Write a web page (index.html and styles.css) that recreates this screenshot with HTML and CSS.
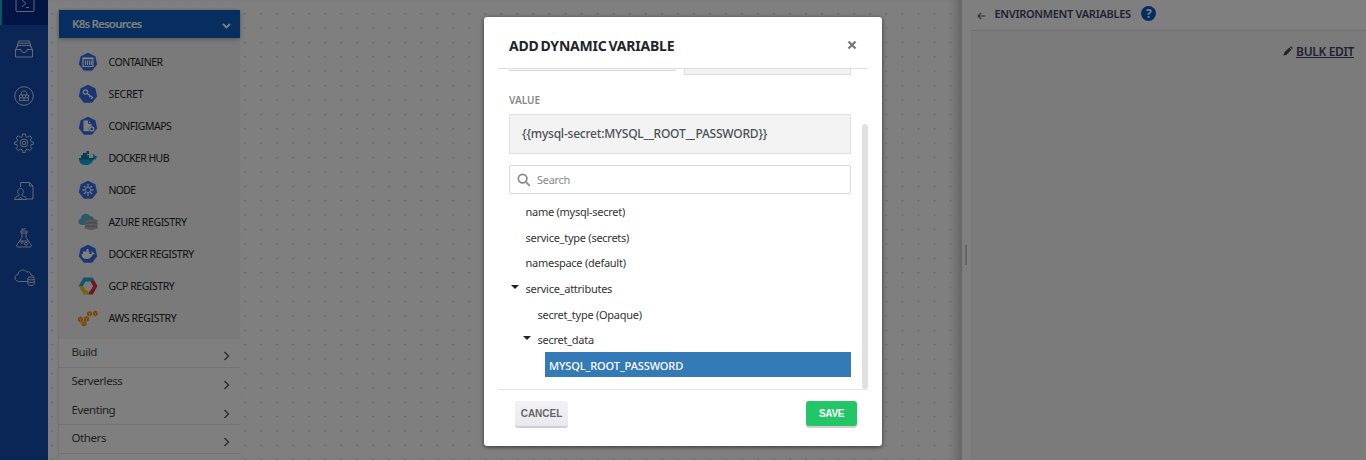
FILE: index.html
```html
<!DOCTYPE html>
<html lang="en">
<head>
<meta charset="utf-8">
<title>Add dynamic variable</title>
<link rel="stylesheet" href="styles.css">
</head>
<body>
<div class="app">
  <nav class="rail">
    <div class="rail-item active"><svg width="20" height="20" viewBox="0 0 20 20"><rect x="1" y="1" width="18" height="16.500" rx="1"/><path d="M7 6l4 3.500-4 3.500M11 13.500h3"/></svg></div>
    <div class="rail-item"><svg width="20" height="20" viewBox="0 0 20 20"><path d="M4.500 2h11M4 4.200h12M3.500 6.400h13M4.500 2L3 8.500M15.500 2L17 8.500M1.500 10.500h5.500c0 2 1.300 3 3 3s3-1 3-3h5.500v7.500h-17zM1.500 10.500L3.500 7M18.500 10.500L16.500 7"/></svg></div>
    <div class="rail-item"><svg width="20" height="20" viewBox="0 0 20 20"><circle cx="10" cy="10" r="9.300"/><path d="M5.500 9h9v5.700h-9zM7.300 9V7.500c0-3.500 5.400-3.500 5.400 0V9M5.500 11.800h9M8.500 9v2.800M11.500 9v2.800M10 12v2.500"/></svg></div>
    <div class="rail-item gear"><svg width="20" height="20" viewBox="0 0 20 20"><path d="M8.600 1h2.800l.5 2.600 1.700.7 2.200-1.500 2 2-1.500 2.200.7 1.700 2.600.5v2l-2.600.5-.7 1.700 1.500 2.200-2 2-2.200-1.500-1.700.7-.5 2.600H8.600l-.5-2.600-1.700-.7-2.200 1.500-2-2 1.500-2.200-.7-1.700L.5 11.200v-2L3 8.700 3.700 7 2.200 4.800l2-2 2.200 1.500 1.700-.7z"/><circle cx="10" cy="10" r="3.900"/><circle cx="10" cy="10" r="1.700"/></svg></div>
    <div class="rail-item"><svg width="20" height="20" viewBox="0 0 20 20"><path d="M6.500 6V1.500h9l3.500 3.500v13h-6M15.500 1.500V5H19M4.800 13.500c-1.700-2-1.500-6 1.700-6s3.400 4 1.700 6v1.300c2 .6 4 1 4.300 3.700h-12c.3-2.700 2.300-3.100 4.300-3.700zM4 18.500l2.500-2 2.500 2"/></svg></div>
    <div class="rail-item"><svg width="20" height="20" viewBox="0 0 20 20"><path d="M7 3h6v2H7zM8 5v4.500L2.800 17c-.5 1.400 0 2 1.200 2h12c1.200 0 1.700-.6 1.200-2L12 9.500V5M8 3V1h3V.3M5.200 13h9.600"/><circle cx="8" cy="14.500" r="1"/><circle cx="12" cy="15.800" r="1.500"/></svg></div>
    <div class="rail-item last"><svg width="21" height="20" viewBox="0 0 21 20"><path d="M13 14.500H4.500c-4.500-.5-4.500-6.500-.5-7 .3-4.500 6-6.200 8.500-2.500 3-.8 4.500 1 4.500 3 1.500.2 2.500 1 3 2.200"/><ellipse cx="17" cy="11.500" rx="3.200" ry="1.500"/><path d="M13.800 11.500v5.500c0 2 6.400 2 6.400 0v-5.500M13.800 14.300c0 1.700 6.400 1.700 6.400 0"/></svg></div>
  </nav>

  <main class="canvas">
    <svg class="dots" width="914" height="460"><defs><pattern id="dot" x="3.200" y="13" width="16.040" height="14.390" patternUnits="userSpaceOnUse"><rect width="2.200" height="1.400" fill="#d6d6d6"/></pattern></defs><rect width="914" height="460" fill="url(#dot)"/></svg>
    <aside class="palette">
      <div class="palette-head"><span class="t-head">K8s Resources</span><svg width="9" height="6" viewBox="0 0 9 6"><path d="M1 1l3.500 3.500L8 1"/></svg></div>
      <ul class="resources">
        <li class="t47"><svg width="20" height="20" viewBox="0 0 20 20"><path class="k8s" d="M10 .8l7.300 3.500 1.900 7.900-5.100 6.600H5.900L.8 12.200l1.900-7.900z"/><path d="M5 6h10v8.500H5z" fill="none" stroke="#fff" stroke-width="1.200"/><path d="M5 6.500h10" stroke="#fff" stroke-width="1.600"/><path d="M7.500 8.500v4.500M9.500 8.500v4.500M11.500 8.500v4.500M13.300 8.500v4.500" stroke="#fff" stroke-width="1.100"/></svg><span>CONTAINER</span></li>
        <li class="t28"><svg width="20" height="20" viewBox="0 0 20 20"><path class="k8s" d="M10 .8l7.300 3.500 1.900 7.900-5.100 6.600H5.900L.8 12.200l1.900-7.900z"/><g fill="none" stroke="#fff" stroke-width="1.200"><circle cx="7.500" cy="8" r="2.200"/><path d="M9.300 9.500l5.700 4.500M12.300 12l-1 1.300M14.300 13.600l-1 1.200"/></g></svg><span>SECRET</span></li>
        <li class="t47"><svg width="20" height="20" viewBox="0 0 20 20"><path class="k8s" d="M10 .8l7.300 3.500 1.900 7.900-5.100 6.600H5.900L.8 12.200l1.900-7.900z"/><path d="M5.500 4.500h5l3 3V10c-2.500.4-3.600 2.800-2.300 5.300H5.500z" fill="#fff"/><path d="M10.500 4.500v3h3" fill="none" stroke="#326de6"/><circle cx="13.700" cy="13" r="2" fill="none" stroke="#fff" stroke-width="1.400"/></svg><span>CONFIGMAPS</span></li>
        <li class="t53"><svg width="20" height="20" viewBox="0 0 20 20"><path d="M1 10h13.500c1-.5.800-2.500 0-3.500 1-.8 2.200.3 2.300 1.500 1-.2 2 0 2.700.6-.6 1.300-2 1.800-3.200 1.800C14.500 15 11.500 17 7.500 17 3 17 1 14.500 1 10z" fill="#0aa5e3"/><path d="M3 7h8v3H3zM5 5h4v2H5zM8.500 3H11v3H8.500z" fill="#0a86bd"/><path d="M1 10.800h17M5.500 5v5M8 5v5" stroke="#124f70" stroke-width=".8"/></svg><span>DOCKER HUB</span></li>
        <li class="t70"><svg width="20" height="20" viewBox="0 0 20 20"><path class="k8s" d="M10 .8l7.300 3.500 1.900 7.900-5.100 6.600H5.900L.8 12.200l1.900-7.900z"/><path d="M10 4v4M10 12v4M4.500 10H8M12 10h3.500M6 6l2.500 2.500M11.500 11.500L14 14M14 6l-2.500 2.500M8.500 11.500L6 14" stroke="#fff" stroke-width="1.500" stroke-dasharray="1.800 .5"/></svg><span>NODE</span></li>
        <li class="t36"><svg width="20" height="20" viewBox="0 0 20 20"><path d="M4 13C-.8 12.500-.4 7 3 6.500 3 1.500 9.500 0 12 4c3 0 4.500 2 4.200 5L10 13z" fill="#59b4d9"/><path d="M7 8.500l6-2 6.500 1.500v8.500L13 18l-6-1.500z" fill="#9c9c9c"/><path d="M7 10l6-1.500 6.500 1M7 13l6-.5 6.500.5M13 12.500V18M7 16h12.500" fill="none" stroke="#c8c8c8" stroke-width=".8"/></svg><span>AZURE REGISTRY</span></li>
        <li class="t43"><svg width="20" height="20" viewBox="0 0 20 20"><path class="k8s" d="M10 .8l7.300 3.500 1.900 7.900-5.100 6.600H5.900L.8 12.200l1.900-7.900z"/><path d="M3.500 10h9.700c.7-.7.500-2 0-2.600 1-.3 1.600.6 1.700 1.400.8-.2 1.500 0 2 .5-.5.9-1.300 1.300-2.200 1.300-1 3-3 4.400-6 4.400-3.300 0-5.200-1.700-5.200-5zM5 7.500h6.500v2.600H5zM8.500 5h2v2.500h-2z" fill="#fff"/></svg><span>DOCKER REGISTRY</span></li>
        <li class="t43"><svg width="20" height="20" viewBox="0 0 20 20"><path d="M14.500 1.500L19.500 10l-4.700 8.500H9.500L13 13l2-3-3-4z" fill="#e2303c"/><path d="M.8 10L5.500 18.500h6L9 13.500 5.500 9 3 6z" fill="#f2c51d"/><path d="M5.500 1.500h9l1 2-3 3H8L5 10H.8z" fill="#20a9e0"/><path d="M7.500 5.500h5L15 10l-2.500 4.500h-5L5 10z" fill="#f2f4f6"/></svg><span>GCP REGISTRY</span></li>
        <li class="t36"><svg width="20" height="20" viewBox="0 0 20 20"><g fill="#f58a07"><path d="M0 10l2.500-1.500L5 10v3l-2.500 1.500L0 13zM3.500 14.500L6 13l2.500 1.500v2.500L6 18.500l-2.500-1.500zM6 9.500L8.500 8 11 9.500v3L8.500 14 6 12.500zM9 4.500L11.500 3 14 4.500V7l-2.500 1.500L9 7zM15 4l2.300-1.500L19.600 4v3l-2.300 1.500L15 7z"/></g><path d="M1 10.500l1.500 1L4 10.500M2.500 11.500v2M7 10l1.500 1L10 10M8.500 11v2M4.500 15L6 16l1.500-1M10 5l1.500 1L13 5M11.500 6v2M16 4.500l1.300 1 1.300-1M17.300 5.500v2" fill="none" stroke="#ffe0b8" stroke-width=".7"/></svg><span>AWS REGISTRY</span></li>
      </ul>
      <div class="groups">
        <div class="group"><span>Build</span><svg width="7" height="10" viewBox="0 0 7 10"><path d="M1.500 1l4 4-4 4"/></svg></div>
        <div class="group"><span>Serverless</span><svg width="7" height="10" viewBox="0 0 7 10"><path d="M1.500 1l4 4-4 4"/></svg></div>
        <div class="group"><span>Eventing</span><svg width="7" height="10" viewBox="0 0 7 10"><path d="M1.500 1l4 4-4 4"/></svg></div>
        <div class="group"><span>Others</span><svg width="7" height="10" viewBox="0 0 7 10"><path d="M1.500 1l4 4-4 4"/></svg></div>
      </div>
    </aside>
  </main>

  <section class="side">
    <div class="grip"><i></i></div>
    <div class="side-main">
      <header class="side-head">
        <svg width="9" height="8" viewBox="0 0 9 8"><path d="M8.500 4H1M4 1L1 4l3 3" fill="none" stroke="#666" stroke-width="1.200"/></svg>
        <h2>ENVIRONMENT VARIABLES</h2>
        <span class="help">?</span>
      </header>
      <div class="side-body">
        <svg width="10" height="10" viewBox="0 0 10 10"><path d="M.5 9.500l.6-2.800L6.200 1.600l2.200 2.200-5.100 5.100zM6.900 1L7.500.4c.5-.4 2.400 1.500 2 2L8.900 3z" fill="#3f4763"/></svg>
        <a>BULK EDIT</a>
      </div>
    </div>
  </section>
</div>

<div class="overlay">
  <div class="modal">
    <header class="modal-head"><h1>ADD DYNAMIC VARIABLE</h1><svg width="10" height="10" viewBox="0 0 10 10"><path d="M1.500 1.500l7 7M8.500 1.500l-7 7" stroke="#777" stroke-width="2.200"/></svg></header>
    <div class="modal-body">
      <div class="form">
        <div class="cut-row"><div class="cut-left"></div><div class="cut-right"></div></div>
        <label class="label">VALUE</label>
        <div class="value">{{mysql-secret:MYSQL_<b></b>ROOT_<b></b>PASSWORD}}</div>
        <div class="search"><svg width="14" height="14" viewBox="0 0 14 14"><circle cx="5.600" cy="5.600" r="4.300"/><path d="M8.800 8.800l4 4"/></svg><span>Search</span></div>
        <div class="tree">
          <div class="row l1"><span>name (mysql-secret)</span></div>
          <div class="row l1"><span>service_type (secrets)</span></div>
          <div class="row l1"><span>namespace (default)</span></div>
          <div class="row l1 open"><i></i><span>service_attributes</span></div>
          <div class="row l2"><span>secret_type (Opaque)</span></div>
          <div class="row l2 open"><i></i><span>secret_data</span></div>
          <div class="row l3"><span>MYSQL_ROOT_PASSWORD</span></div>
        </div>
      </div>
      <div class="scroll"></div>
    </div>
    <footer class="modal-foot"><button class="btn cancel">CANCEL</button><button class="btn save">SAVE</button></footer>
  </div>
</div>
</body>
</html>
```

FILE: styles.css
```css
* { box-sizing: border-box; }
body { margin: 0; font-family: "Noto Sans", sans-serif; color: #333; overflow: hidden; }
h1, h2, ul { margin: 0; padding: 0; list-style: none; }
svg { display: block; flex: none; }
span, h1, h2 { white-space: nowrap; }
.app { display: flex; width: 1366px; height: 460px; overflow: hidden; background: #fff; }

.rail { width: 48px; flex: none; background: #144cac; display: flex; flex-direction: column; margin-top: -22px; height: 482px; }
.rail-item { height: 47.300px; flex: none; display: flex; align-items: center; justify-content: center; }
.rail-item svg { fill: none; stroke: #cdd3e2; stroke-width: 1; }
.rail-item.active { background: #002a86; border-left: 2px solid #1aa6cf; }
.rail-item.active svg { margin-top: 4px; }
.rail-item.gear { padding-bottom: 2px; }
.rail-item.last { height: 30px; }

.canvas { width: 914px; flex: none; position: relative; background: #fff; padding: 10px 0 0 11px; box-shadow: inset -12px 0 12px -8px #bbb; }
.dots { position: absolute; inset: 0; }
.palette { position: relative; width: 181px; height: 450px; background: #fff; display: flex; flex-direction: column; box-shadow: -1px 0 2px #e2e2e2; }
.palette-head { height: 28px; flex: none; background: #0c5ec0; color: #fff; display: flex; justify-content: space-between; align-items: center; padding: 0 9px 2px 13px; font-size: 11.500px; font-weight: 600; box-shadow: 0 1px 4px #aaa; z-index: 1; }
.t-head { letter-spacing: -.8px; }
.palette-head svg { margin-top: 6px; fill: none; stroke: #fff; stroke-width: 1.800; }
.resources { background: #f4f4f4; height: 301px; flex: none; padding-top: 8px; }
.resources li { height: 32px; display: flex; align-items: center; gap: 10.500px; padding-left: 19px; font-size: 10.500px; color: #222; }
.t28 { letter-spacing: -.28px; }
.t36 { letter-spacing: -.37px; }
.t43 { letter-spacing: -.43px; }
.t47 { letter-spacing: -.47px; }
.t53 { letter-spacing: -.6px; }
.t70 { letter-spacing: -.7px; }
.k8s { fill: #326de6; }
.group { height: 28.800px; border-bottom: 1px solid #e6e6e6; display: flex; justify-content: space-between; padding: 0 10px 0 12.500px; font-size: 11.500px; line-height: 25.500px; color: #444; letter-spacing: -.42px; }
.group svg { margin-top: 12px; fill: none; stroke: #555; stroke-width: 1.400; }
.group:nth-child(2) { border-color: transparent; }

.side { flex: 1; display: flex; background: #fff; }
.grip { width: 9px; display: flex; align-items: center; padding: 50px 0 0 3px; }
.grip i { width: 2px; height: 20px; background: #c8c8c8; }
.side-main { flex: 1; }
.side-head { height: 31px; border-bottom: 1px solid #e0e0e0; display: flex; align-items: center; padding: 0 0 3px 6px; }
.side-head h2 { font-size: 11px; font-weight: 600; color: #3f4763; margin-left: 8.500px; letter-spacing: -.29px; }
.side-head svg { margin-top: 4px; }
.help { width: 15px; height: 15px; border-radius: 50%; background: #0c57c6; color: #fff; font-size: 12px; font-weight: 700; line-height: 15px; text-align: center; margin: -1px 0 0 10.500px; }
.side-body { height: 429px; background: #f6f6f6; display: flex; justify-content: flex-end; align-items: flex-start; padding: 13px 12px 0 0; gap: 3px; }
.side-body svg { margin-top: 2px; }
.side-body a { font-size: 12px; line-height: 15px; height: 14px; font-weight: 600; color: #3f4763; border-bottom: 1px solid #3f4763; letter-spacing: -.35px; }

.overlay { position: absolute; inset: 0; z-index: 5; background: rgba(0, 0, 0, .5); display: flex; justify-content: center; align-items: flex-start; padding-top: 17px; }
.modal { width: 398px; height: 429px; background: #fff; border-radius: 3px; padding: 0 14px; display: flex; flex-direction: column; box-shadow: 0 1px 4px rgba(0, 0, 0, .6); }
.modal-head { height: 52px; flex: none; border-bottom: 1px solid #dedede; display: flex; align-items: center; justify-content: space-between; padding: 5px 11px 0 11px; }
.modal-head h1 { font-size: 14px; font-weight: 700; color: #212529; letter-spacing: -.2px; word-spacing: -1.600px; }
.modal-body { height: 320px; flex: none; display: flex; overflow: hidden; }
.form { width: 342px; margin-left: 11px; flex: none; }
.cut-row { display: flex; gap: 8px; height: 6px; }
.cut-left { width: 167px; height: 2px; border-bottom: 1px solid #d8d8d8; background: #f3f3f3; }
.cut-right { width: 167px; background: #f3f3f3; border: 1px solid #dcdcdc; border-top: 0; }
.label { display: block; margin-top: 17px; height: 22px; line-height: 16px; font-size: 10px; font-weight: 600; color: #888; }
.value { height: 40px; background: #f3f3f3; border: 1px solid #dedede; border-radius: 1px; padding-left: 12px; font-size: 12px; line-height: 38px; color: #495057; font-weight: 500; white-space: nowrap; letter-spacing: -.22px; }
.value b { display: inline-block; width: 5px; height: 1px; background: #495057; vertical-align: -2px; }
.search { height: 29px; margin-top: 11px; border: 1px solid #d9d9d9; border-radius: 2px; display: flex; align-items: center; padding-left: 7px; gap: 6px; font-size: 11px; color: #888; letter-spacing: -.3px; }
.search svg { fill: none; stroke: #888; stroke-width: 1.700; }
.tree { padding-top: 5px; font-size: 11px; color: #333; letter-spacing: -.26px; }
.row { height: 25.600px; display: flex; align-items: center; }
.l1 { padding-left: 16.500px; }
.l2 { padding-left: 28.500px; }
.row i { width: 0; border: 4px solid transparent; border-top-color: #222; border-bottom: 0; margin: -4px 7px 0 -15px; }
.l3 { margin: -.6px 0 0 36px; padding: 2px 0 0 4px; background: #337ab7; color: #fff; height: 25px; font-weight: 500; letter-spacing: -.1px; }
.scroll { width: 6px; height: 265px; margin: 55px 0 0 11px; background: #e0e0e0; border-radius: 3px; }
.modal-foot { border-top: 1px solid #e5e5e5; display: flex; justify-content: space-between; padding: 11px 11px 0 17px; }
.btn { border: 0; padding: 0; height: 25px; border-radius: 3px; font: 700 10px/25px "Liberation Sans", sans-serif; }
.cancel { width: 53px; background: linear-gradient(#f2f2f6, #e9e9ef); color: #666; box-shadow: 0 2px 0 #d0d0d4; }
.save { width: 51px; background: #22c666; color: #fff; box-shadow: 0 2px 0 #d0d0d0; letter-spacing: -.4px; }
```
